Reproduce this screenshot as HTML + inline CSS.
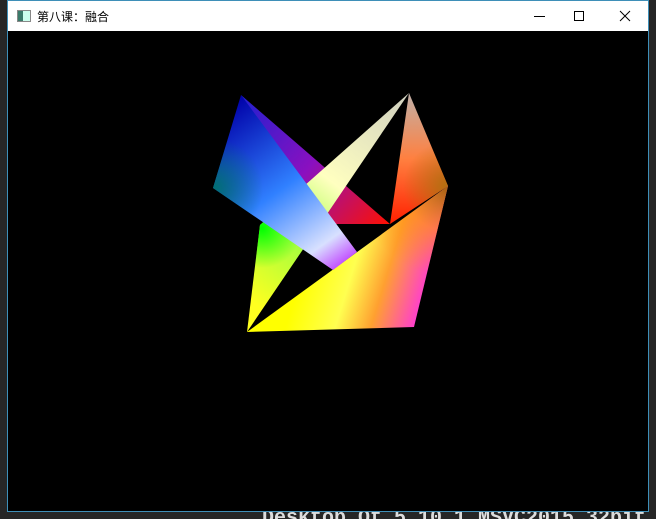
<!DOCTYPE html>
<html><head><meta charset="utf-8"><style>
html,body{margin:0;padding:0;width:656px;height:519px;overflow:hidden;background:#262626;font-family:"Liberation Sans","Noto Sans CJK SC",sans-serif;position:relative;}
.win{position:absolute;left:7px;top:0;width:640px;height:510px;border:1px solid #3e8fb8;background:#000;}
.tb{position:absolute;left:0;top:0;width:640px;height:30px;background:#fff;}
.title{position:absolute;left:29px;top:7px;font-size:12px;color:#000;}
.ic{position:absolute;left:9px;top:9px;width:12px;height:10px;border:1px solid #888;background:linear-gradient(90deg,#3a7a6a 40%,#cfe 40%);}
.bot{position:absolute;left:262px;top:507px;font-family:"Liberation Mono",monospace;font-size:20px;line-height:24px;color:#ddd;font-weight:bold;white-space:nowrap;}
</style></head><body>
<div class="bot">Desktop Qt 5.10.1 MSVC2015 32bit</div>
<div class="win">
<div class="tb"><div class="ic"></div><div class="title">第八课：融合</div>
<svg style="position:absolute;left:500px;top:0" width="140" height="30">
<line x1="26" y1="15.5" x2="37" y2="15.5" stroke="#000"/>
<rect x="66.5" y="10.5" width="9" height="9" fill="none" stroke="#000"/>
<path d="M112 10L122 20M122 10L112 20" stroke="#000"/>
</svg></div>
<svg style="position:absolute;left:-8px;top:-1px" width="656" height="519">
<defs>
<linearGradient id="g1" x1="241" y1="95" x2="390" y2="224" gradientUnits="userSpaceOnUse"><stop offset="0" stop-color="#2020d0"/><stop offset=".5" stop-color="#8a10c0"/><stop offset="1" stop-color="#ff1000"/></linearGradient>
<linearGradient id="g2" x1="409" y1="93" x2="250" y2="300" gradientUnits="userSpaceOnUse"><stop offset="0" stop-color="#d0d0c0"/><stop offset=".45" stop-color="#ffffc0"/><stop offset=".7" stop-color="#a0ff40"/><stop offset="1" stop-color="#ffff20"/></linearGradient>
<radialGradient id="g2b" cx="262" cy="228" r="40" gradientUnits="userSpaceOnUse"><stop offset="0" stop-color="#00ff00"/><stop offset="1" stop-color="#00ff00" stop-opacity="0"/></radialGradient>
<linearGradient id="g3" x1="409" y1="93" x2="410" y2="224" gradientUnits="userSpaceOnUse"><stop offset="0" stop-color="#c0b0a8"/><stop offset=".5" stop-color="#ff8040"/><stop offset="1" stop-color="#ff2000"/></linearGradient>
<radialGradient id="g3b" cx="448" cy="186" r="45" gradientUnits="userSpaceOnUse"><stop offset="0" stop-color="#b07010"/><stop offset="1" stop-color="#b07010" stop-opacity="0"/></radialGradient>
<linearGradient id="g4" x1="300" y1="280" x2="430" y2="320" gradientUnits="userSpaceOnUse"><stop offset="0" stop-color="#ffff00"/><stop offset=".35" stop-color="#ffff50"/><stop offset=".6" stop-color="#ffa030"/><stop offset="1" stop-color="#ff20ff"/></linearGradient>
<radialGradient id="g4b" cx="448" cy="186" r="90" gradientUnits="userSpaceOnUse"><stop offset="0" stop-color="#a06010"/><stop offset=".5" stop-color="#ff9010" stop-opacity=".6"/><stop offset="1" stop-color="#ff9010" stop-opacity="0"/></radialGradient>
<linearGradient id="g5" x1="235" y1="100" x2="350" y2="262" gradientUnits="userSpaceOnUse"><stop offset="0" stop-color="#0000a8"/><stop offset=".5" stop-color="#3080ff"/><stop offset=".85" stop-color="#d8e0ff"/><stop offset="1" stop-color="#c040ff"/></linearGradient>
<radialGradient id="g5b" cx="213" cy="188" r="50" gradientUnits="userSpaceOnUse"><stop offset="0" stop-color="#007070"/><stop offset="1" stop-color="#007070" stop-opacity="0"/></radialGradient>
</defs>
<polygon points="241,95 390,224 330,224" fill="url(#g1)"/>
<polygon points="409,93 260,225 247,332" fill="url(#g2)"/>
<polygon points="409,93 260,225 247,332" fill="url(#g2b)"/>
<polygon points="409,93 448,186 390,224" fill="url(#g3)"/>
<polygon points="409,93 448,186 390,224" fill="url(#g3b)"/>
<polygon points="247,332 448,186 414,327" fill="url(#g4)"/>
<polygon points="247,332 448,186 414,327" fill="url(#g4b)"/>
<polygon points="241,95 213,188 333,270 357,252" fill="url(#g5)"/>
<polygon points="241,95 213,188 333,270 357,252" fill="url(#g5b)"/>
</svg>
</div>
</body></html>
